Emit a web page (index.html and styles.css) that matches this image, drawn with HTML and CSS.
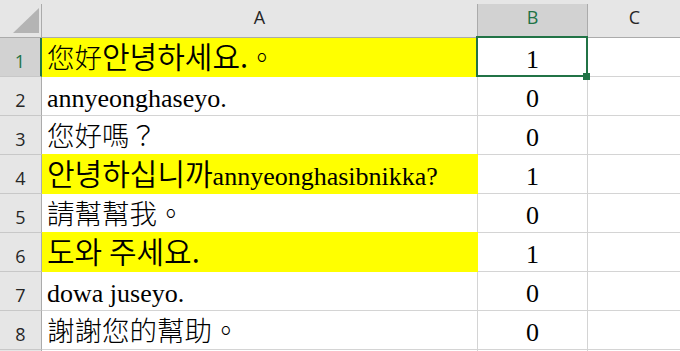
FILE: index.html
```html
<!DOCTYPE html>
<html>
<head>
<meta charset="utf-8">
<link rel="stylesheet" href="styles.css">
</head>
<body>
<div class="top"></div>
<div class="grid">
  <div class="cell corner"><svg width="41" height="33" viewBox="0 0 41 33"><polygon points="13,29 39,29 39,4" fill="#b4b4b4"/></svg></div>
  <div class="cell colhead adj">A</div>
  <div class="cell colhead selcol">B</div>
  <div class="cell colhead">C</div>

  <div class="cell rowhead selrow">1</div>
  <div class="cell a hl first"><span class="cjk">您好</span><span class="ko">안녕하세요.</span><span class="cjk">。</span></div>
  <div class="cell b active">1<div class="selbox"></div><div class="handle"></div></div>
  <div class="cell c"></div>

  <div class="cell rowhead">2</div>
  <div class="cell a">annyeonghaseyo.</div>
  <div class="cell b">0</div>
  <div class="cell c"></div>

  <div class="cell rowhead">3</div>
  <div class="cell a"><span class="cjk">您好嗎？</span></div>
  <div class="cell b">0</div>
  <div class="cell c"></div>

  <div class="cell rowhead">4</div>
  <div class="cell a hl"><span class="ko">안녕하십니까</span>annyeonghasibnikka?</div>
  <div class="cell b">1</div>
  <div class="cell c"></div>

  <div class="cell rowhead">5</div>
  <div class="cell a"><span class="cjk">請幫幫我。</span></div>
  <div class="cell b">0</div>
  <div class="cell c"></div>

  <div class="cell rowhead">6</div>
  <div class="cell a hl"><span class="ko">도와 주세요.</span></div>
  <div class="cell b">1</div>
  <div class="cell c"></div>

  <div class="cell rowhead">7</div>
  <div class="cell a">dowa juseyo.</div>
  <div class="cell b">0</div>
  <div class="cell c"></div>

  <div class="cell rowhead">8</div>
  <div class="cell a"><span class="cjk">謝謝您的幫助。</span></div>
  <div class="cell b">0</div>
  <div class="cell c"></div>

  <div class="cell rowhead"></div>
  <div class="cell a"></div>
  <div class="cell b"></div>
  <div class="cell c"></div>
</div>
</body>
</html>
```

FILE: styles.css
```css
html, body {
  margin: 0;
  padding: 0;
}
body {
  width: 680px;
  height: 351px;
  overflow: hidden;
  background: #ffffff;
}
.top {
  height: 4px;
  background: #e6e6e6;
}
.grid {
  display: grid;
  grid-template-columns: 42px 436px 110px 94px;
  grid-template-rows: 34px repeat(9, 39px);
}
.cell {
  box-sizing: border-box;
  border-right: 1px solid #d4d4d4;
  border-bottom: 1px solid #d4d4d4;
  position: relative;
  white-space: nowrap;
}
.corner {
  background: #e6e6e6;
  border-right-color: #ababab;
  border-bottom-color: #ababab;
}
.corner svg {
  display: block;
}
.colhead {
  background: #e6e6e6;
  border-right-color: #e6e6e6;
  border-bottom-color: #ababab;
  font-family: "Open Sans", "Noto Sans", sans-serif;
  font-size: 18px;
  line-height: 26px;
  color: #262626;
  text-align: center;
}
.colhead.adj {
  border-right-color: #ababab;
}
.colhead.selcol {
  background: #d2d2d2;
  border-right-color: #ababab;
  color: #217346;
}
.rowhead {
  background: #e6e6e6;
  border-right-color: #ababab;
  border-bottom-color: #c8c8c8;
  font-family: "Open Sans", "Noto Sans", sans-serif;
  font-size: 18px;
  line-height: 30px;
  padding-top: 8px;
  color: #262626;
  text-align: center;
}
.rowhead.selrow {
  background: #d2d2d2;
  border-right: 2px solid #217346;
  color: #217346;
}
.a, .b {
  font-family: "Liberation Serif", "Noto Sans CJK TC", serif;
  font-size: 26px;
  line-height: 32px;
  padding-top: 6px;
  color: #000;
}
.a {
  padding-left: 5px;
}
.b {
  text-align: center;
}
.cjk {
  font-family: "Noto Sans CJK TC", sans-serif;
  font-size: 27.5px;
  line-height: 20px;
  font-weight: 300;
}
.ko {
  font-family: "Noto Sans CJK KR", "Noto Sans CJK TC", sans-serif;
  font-size: 30px;
  line-height: 20px;
  font-weight: 350;
}
.hl {
  background: #ffff00;
  border-right-color: #ffff00;
  border-bottom-color: #ffff00;
  box-shadow: 0 -1px 0 #ffff00;
}
.hl.first {
  box-shadow: none;
}
.active {
  z-index: 2;
}
.selbox {
  position: absolute;
  left: -2px;
  top: -2px;
  width: 112px;
  height: 41px;
  box-sizing: border-box;
  border: 2px solid #217346;
}
.handle {
  position: absolute;
  left: 105px;
  top: 35px;
  width: 7px;
  height: 7px;
  background: #217346;
}
```
